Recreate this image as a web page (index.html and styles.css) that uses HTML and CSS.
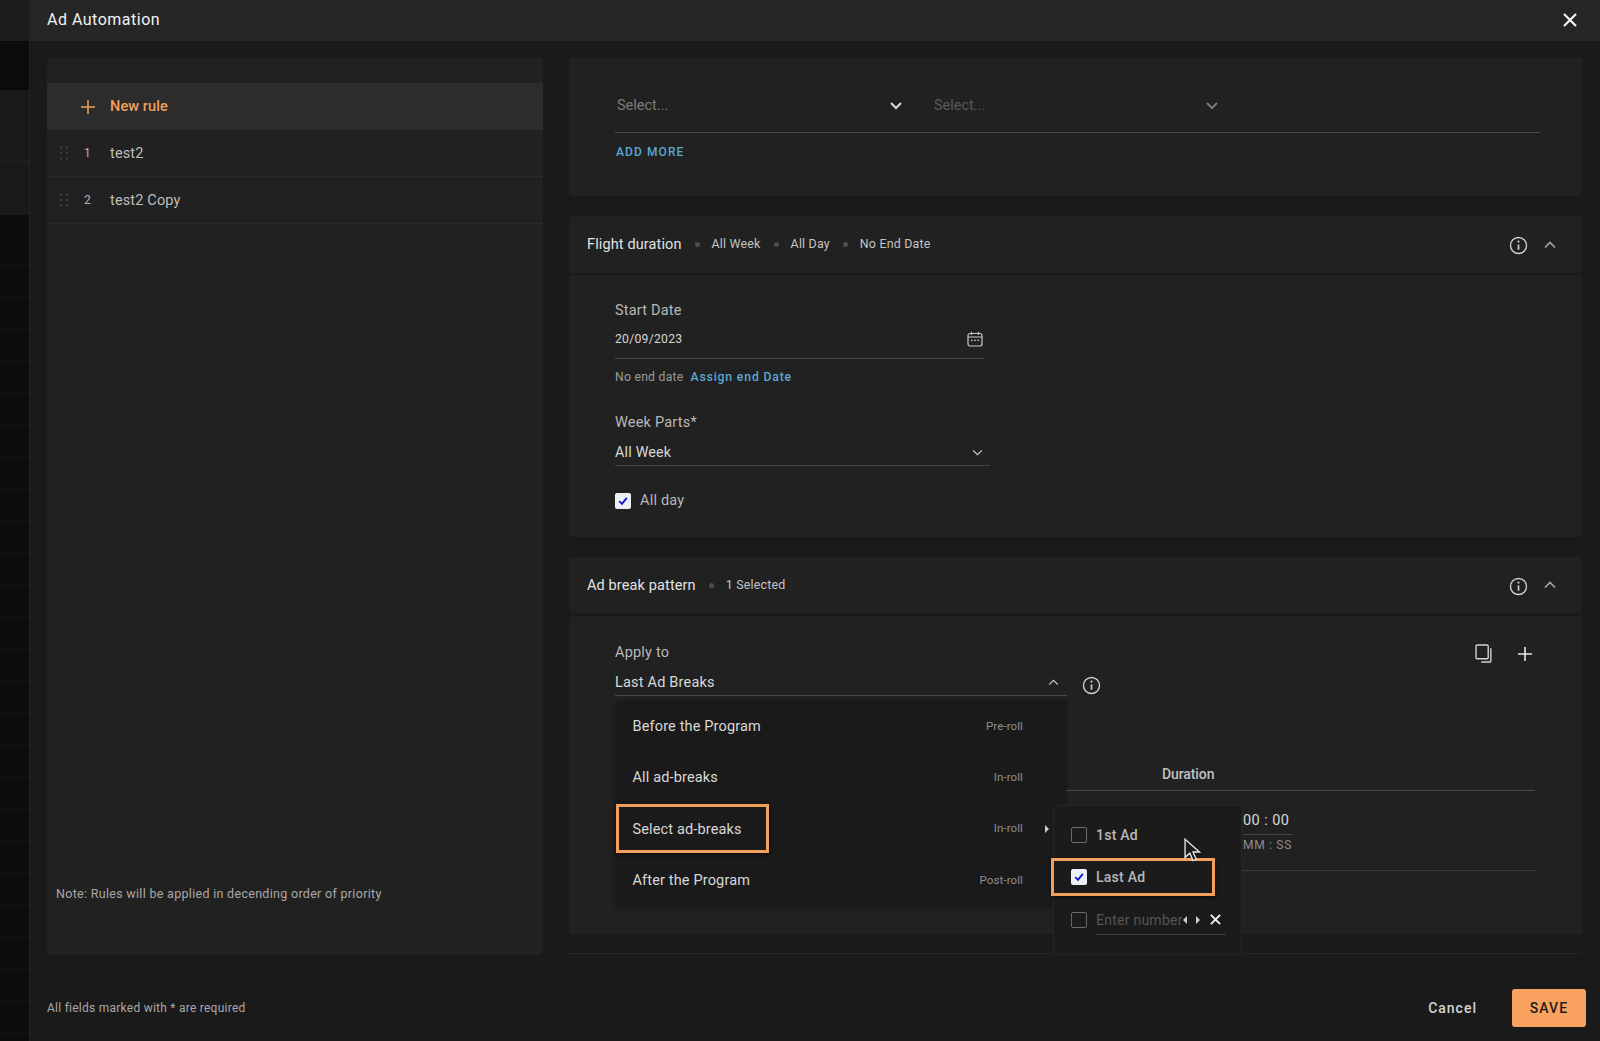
FILE: index.html
```html
<!DOCTYPE html>
<html lang="en">
<head>
<meta charset="utf-8">
<title>Ad Automation</title>
<link rel="stylesheet" href="styles.css">
</head>
<body>
<div class="app">
  <div class="strip">
    <div class="s-top"></div>
    <div class="s-dark"></div>
    <div class="s-mid"></div>
    <div class="s-mid s-mid2"></div>
    <div class="s-rows"></div>
  </div>
  <div class="drawer">
    <header class="top">
      <h1 class="title">Ad Automation</h1>
      <svg class="close" viewBox="0 0 16 16" width="16" height="16"><path d="M2 2l12 12M14 2L2 14"/></svg>
    </header>
    <main class="main">
      <aside class="rules">
        <div class="new-rule">
          <svg class="plus-orange" viewBox="0 0 14 14" width="14" height="14"><path d="M7 0v14M0 7h14"/></svg>
          <span>New rule</span>
        </div>
        <div class="rule">
          <svg class="grip" viewBox="0 0 8 14" width="8" height="14"><circle cx="1" cy="1.5" r="1"/><circle cx="7" cy="1.5" r="1"/><circle cx="1" cy="7" r="1"/><circle cx="7" cy="7" r="1"/><circle cx="1" cy="12.5" r="1"/><circle cx="7" cy="12.5" r="1"/></svg>
          <span class="num">1</span><span class="rname">test2</span>
        </div>
        <div class="rule">
          <svg class="grip" viewBox="0 0 8 14" width="8" height="14"><circle cx="1" cy="1.5" r="1"/><circle cx="7" cy="1.5" r="1"/><circle cx="1" cy="7" r="1"/><circle cx="7" cy="7" r="1"/><circle cx="1" cy="12.5" r="1"/><circle cx="7" cy="12.5" r="1"/></svg>
          <span class="num">2</span><span class="rname">test2 Copy</span>
        </div>
        <p class="note">Note: Rules will be applied in decending order of priority</p>
      </aside>

      <section class="content">
        <div class="card card-select">
          <div class="select-row">
            <div class="sel"><span>Select...</span><svg class="chev-bold" viewBox="0 0 12 8" width="12" height="8"><path d="M1 1l5 5 5-5"/></svg></div>
            <div class="sel sel-dim"><span>Select...</span><svg class="chev-bold" viewBox="0 0 12 8" width="12" height="8"><path d="M1 1l5 5 5-5"/></svg></div>
          </div>
          <a class="add-more">ADD MORE</a>
        </div>

        <div class="card sec-head">
          <span class="sec-title">Flight duration</span>
          <i class="dot"></i><span class="meta">All Week</span>
          <i class="dot"></i><span class="meta">All Day</span>
          <i class="dot"></i><span class="meta">No End Date</span>
          <span class="grow"></span>
          <svg class="info" viewBox="0 0 18 18" width="19" height="19"><circle cx="9" cy="9" r="7.6"/><path d="M9 8v5"/><circle class="fill" cx="9" cy="5.3" r="1"/></svg>
          <svg class="chev-up" viewBox="0 0 12 8" width="12" height="8"><path d="M1 6.5L6 1.5l5 5"/></svg>
        </div>
        <div class="card flight">
          <div class="label">Start Date</div>
          <div class="date-field">
            <span>20/09/2023</span>
            <svg class="cal" viewBox="0 0 16 16" width="16" height="16"><rect x="1" y="2.5" width="14" height="12.5" rx="2"/><path d="M1 6h14M4.5 .8v3M11.5 .8v3"/><path class="dash" d="M4 9.3h1.600M7.2 9.3h1.600M10.4 9.3h1.600"/></svg>
          </div>
          <div class="end-line"><span>No end date</span><a>Assign end Date</a></div>
          <div class="label label-week">Week Parts*</div>
          <div class="week-field">
            <span>All Week</span>
            <svg class="chev-thin" viewBox="0 0 12 8" width="11" height="7"><path d="M1 1.5l5 5 5-5"/></svg>
          </div>
          <label class="allday">
            <span class="check on"><svg viewBox="0 0 12 12" width="12" height="12"><path d="M2.3 6.2l2.7 2.7 4.8-6"/></svg></span>
            <span>All day</span>
          </label>
        </div>

        <div class="card sec-head sec-head2">
          <span class="sec-title">Ad break pattern</span>
          <i class="dot"></i><span class="meta">1 Selected</span>
          <span class="grow"></span>
          <svg class="info" viewBox="0 0 18 18" width="19" height="19"><circle cx="9" cy="9" r="7.6"/><path d="M9 8v5"/><circle class="fill" cx="9" cy="5.3" r="1"/></svg>
          <svg class="chev-up" viewBox="0 0 12 8" width="12" height="8"><path d="M1 6.5L6 1.5l5 5"/></svg>
        </div>
        <div class="card pattern">
          <div class="tools">
            <svg class="copy" viewBox="0 0 18 18" width="19" height="19"><rect x="1" y="1" width="11.5" height="13" rx="1"/><path d="M15 4v12.2a.8.8 0 0 1-.8.8H6"/></svg>
            <svg class="plus-white" viewBox="0 0 14 14" width="14" height="14"><path d="M7 0v14M0 7h14"/></svg>
          </div>
          <div class="label">Apply to</div>
          <div class="apply-row">
            <div class="apply-field">
              <span>Last Ad Breaks</span>
              <svg class="chev-thin" viewBox="0 0 12 8" width="11" height="7"><path d="M1 6.5l5-5 5 5"/></svg>
            </div>
            <svg class="info info-apply" viewBox="0 0 18 18" width="19" height="19"><circle cx="9" cy="9" r="7.6"/><path d="M9 8v5"/><circle class="fill" cx="9" cy="5.3" r="1"/></svg>
          </div>
          <div class="table-head"><span>Duration</span></div>
          <div class="table-row">
            <div class="dur"><span class="dur-val">00 : 00</span><span class="dur-unit">MM : SS</span></div>
          </div>

          <div class="menu">
            <div class="mi"><span>Before the Program</span><em>Pre-roll</em></div>
            <div class="mi"><span>All ad-breaks</span><em>In-roll</em></div>
            <div class="mi"><span>Select ad-breaks</span><em>In-roll</em>
              <svg class="tri" viewBox="0 0 6 10" width="6" height="10"><path d="M1 1l4 4-4 4z"/></svg>
            </div>
            <div class="mi"><span>After the Program</span><em>Post-roll</em></div>
            <div class="hl hl-menu"></div>
          </div>

          <div class="submenu">
            <div class="si"><span class="check"></span><span>1st Ad</span></div>
            <div class="si"><span class="check on"><svg viewBox="0 0 12 12" width="12" height="12"><path d="M2.3 6.2l2.7 2.7 4.8-6"/></svg></span><span>Last Ad</span></div>
            <div class="si si-num">
              <span class="check"></span>
              <div class="num-field">
                <span class="ph">Enter number</span>
                <svg class="tri-l" viewBox="0 0 6 10" width="6" height="10"><path d="M5 1L1 5l4 4z"/></svg>
                <svg class="tri tri-r" viewBox="0 0 6 10" width="6" height="10"><path d="M1 1l4 4-4 4z"/></svg>
                <svg class="x-small" viewBox="0 0 10 10" width="11" height="11"><path d="M.8.8l8.400 8.400M9.200.8L.8 9.200"/></svg>
              </div>
            </div>
            <div class="hl hl-sub"></div>
          </div>
          <svg class="cursor" viewBox="0 0 16 24" width="17" height="26"><path d="M1 1v17l4.5-4 3 7 3-1.300-3-6.700H14.500z"/></svg>
        </div>
        <div class="rule-line"></div>
      </section>
    </main>
    <footer class="foot">
      <span class="req">All fields marked with * are required</span>
      <span class="grow"></span>
      <button class="cancel">Cancel</button>
      <button class="save">SAVE</button>
    </footer>
  </div>
</div>
</body>
</html>
```

FILE: styles.css
```css
* { box-sizing: border-box; }
html, body { margin: 0; height: 100%; background: #1a1a1a; }
body { font-family: Roboto, "Liberation Sans", sans-serif; color: #ccc; overflow: hidden; }
svg { display: block; flex: none; fill: none; }
a { cursor: pointer; }

.app { display: flex; width: 1600px; height: 1041px; }

.strip { width: 29px; flex: none; display: flex; flex-direction: column; background: #0d0d0d; }
.s-top { height: 41px; background: #1d1d1d; }
.s-dark { height: 49px; background: #0b0b0b; }
.s-mid { height: 72px; background: #1a1a1a; border-bottom: 1px solid #242424; }
.s-mid2 { height: 53px; border-bottom: 0; }
.s-rows { flex: 1; background: repeating-linear-gradient(to bottom, #0d0d0d 0, #0d0d0d 31px, #171717 31px, #171717 32px); background-position: 0 19px; }

.drawer { flex: 1; min-width: 0; display: flex; flex-direction: column; border-left: 1px solid #232323; }

.top { height: 41px; flex: none; background: #262626; display: flex; align-items: center; padding: 0 22px 2px 17px; justify-content: space-between; }
.title { margin: 0; font-size: 16px; font-weight: 400; color: #f2f2f2; letter-spacing: .5px; }
.close path { stroke: #f2f2f2; stroke-width: 2.2; }

.main { flex: none; height: 919px; display: flex; padding: 17px 18px 0 17px; gap: 26px; }

.rules { width: 496px; flex: none; height: 897px; background: #212121; border-radius: 4px; padding-top: 25px; display: flex; flex-direction: column; }
.new-rule { height: 47px; background: #2c2c2c; display: flex; align-items: center; padding-left: 34px; color: #f0a05c; font-size: 14.5px; font-weight: 500; gap: 15px; letter-spacing: .1px; }
.plus-orange path { stroke: #f0a05c; stroke-width: 1.5; }
.rule { height: 47px; display: flex; align-items: center; border-bottom: 1px solid #292929; padding-left: 13px; }
.grip { fill: #4a4a4a; }
.num { width: 12px; margin-left: 16px; font-size: 12px; color: #b5b5b5; }
.rname { margin-left: 14px; font-size: 14.5px; line-height: 20px; padding-top: 1px; color: #bdbdbd; letter-spacing: .15px; }
.note { margin: auto 0 0; padding: 0 0 53px 9px; font-size: 12.5px; line-height: 16px; color: #a8a8a8; letter-spacing: .3px; }

.content { flex: 1; min-width: 0; display: flex; flex-direction: column; }
.card { background: #212121; border-radius: 3px; }

.card-select { height: 138px; padding: 33px 42px 0 46px; }
.select-row { display: flex; height: 42px; border-bottom: 1px solid #4a4a4a; padding-left: 2px; }
.sel { width: 317px; display: flex; justify-content: space-between; padding: 1px 32px 0 0; height: 28px; align-items: center; font-size: 14.5px; color: #7b7b7b; }
.sel-dim { color: #5a5a5a; width: 289px; padding-right: 5px; }
.chev-bold path { stroke: #d8d8d8; stroke-width: 2; }
.sel-dim .chev-bold path { stroke: #7a7a7a; }
.add-more { display: block; margin: 10px 0 0 1px; font-size: 12px; line-height: 18px; font-weight: 500; color: #5aa7d4; letter-spacing: 1.1px; }

.sec-head { height: 57px; margin-top: 20px; display: flex; align-items: center; padding: 0 26px 0 18px; }
.sec-head2 { height: 56px; }
.sec-title { font-size: 14.5px; color: #e2e2e2; letter-spacing: .12px; }
.dot { width: 5px; height: 5px; border-radius: 50%; background: #4d4d4d; margin: 0 12px 0 13px; }
.meta { font-size: 12.4px; line-height: 16px; padding-bottom: 2px; color: #c4c4c4; letter-spacing: .2px; }
.sec-head2 .meta { padding-bottom: 0; }
.grow { flex: 1; }
.info { margin-top: 2px; }
.info circle { stroke: #cfcfcf; stroke-width: 1.3; }
.info path { stroke: #cfcfcf; stroke-width: 1.6; }
.info .fill { fill: #cfcfcf; stroke: none; }
.chev-up { margin-left: 16px; }
.chev-up path { stroke: #a8a8a8; stroke-width: 1.6; }

.flight { height: 262px; margin-top: 2px; padding: 26px 0 0 46px; }
.label { font-size: 14.5px; line-height: 20px; color: #b8b8b8; letter-spacing: .2px; }
.date-field { width: 369px; height: 38px; display: flex; align-items: center; justify-content: space-between; padding: 2px 1px 3px 0; border-bottom: 1px solid #4a4a4a; font-size: 12.2px; color: #d5d5d5; letter-spacing: .25px; }
.cal rect, .cal path { stroke: #c8c8c8; stroke-width: 1.2; }
.end-line { display: flex; gap: 6px; margin-top: 10px; font-size: 12.2px; line-height: 17px; color: #9a9a9a; letter-spacing: .25px; }
.end-line a { margin-left: 1px; color: #5aa7d4; font-weight: 500; letter-spacing: .85px; }
.label-week { margin-top: 27px; }
.week-field { width: 375px; height: 33px; padding: 6px 7px 0 0; display: flex; align-items: center; justify-content: space-between; border-bottom: 1px solid #444; font-size: 14.3px; color: #d8d8d8; letter-spacing: .2px; }
.chev-thin path { stroke: #d0d0d0; stroke-width: 1.3; }
.allday { display: flex; align-items: center; gap: 9px; margin-top: 26px; font-size: 14.5px; color: #b8b8b8; letter-spacing: .2px; }

.check { width: 16px; height: 16px; flex: none; border: 1.5px solid #6a6a6a; border-radius: 2px; display: flex; align-items: center; justify-content: center; }
.check.on { background: #eef0f8; border: 0; }
.check path { stroke: #1414c8; stroke-width: 1.8; }

.pattern { position: relative; height: 318px; margin-top: 3px; padding: 27px 47px 0 46px; }
.tools { position: absolute; right: 50px; top: 28px; display: flex; align-items: center; gap: 24px; }
.copy rect, .copy path { stroke: #d4d4d4; stroke-width: 1.3; }
.plus-white path { stroke: #e8e8e8; stroke-width: 1.6; }
.apply-row { display: flex; align-items: flex-end; margin-top: 9px; }
.apply-field { width: 452px; height: 24px; display: flex; align-items: center; justify-content: space-between; padding: 1px 8px 3px 0; border-bottom: 1px solid #4a4a4a; font-size: 14.5px; color: #d8d8d8; letter-spacing: .2px; }
.info-apply { margin: 0 0 1px 15px; }

.table-head { margin-top: 68px; height: 27px; border-bottom: 1px solid #4a4a4a; font-size: 14px; font-weight: 500; color: #c0c0c0; padding-left: 547px; line-height: 20px; letter-spacing: -.1px; }
.table-row { height: 80px; border-bottom: 1px solid #3a3a3a; padding-left: 628px; padding-top: 21px; }
.dur { display: flex; flex-direction: column; width: 50px; }
.dur-val { font-size: 14.5px; line-height: 18px; height: 23px; color: #d8d8d8; border-bottom: 1px solid #444; letter-spacing: .45px; white-space: nowrap; }
.dur-unit { font-size: 12px; line-height: 17px; margin-top: 2px; color: #8e8e8e; letter-spacing: .7px; white-space: nowrap; }

.menu { position: absolute; left: 46px; top: 85px; width: 451px; height: 205px; background: #1a1a1a; box-shadow: 0 1px 4px rgba(0,0,0,.25); border-radius: 2px; }
.mi { position: relative; height: 51.3px; display: flex; align-items: center; justify-content: space-between; padding: 0 43px 0 17.5px; font-size: 14.5px; color: #d8d8d8; letter-spacing: .15px; }
.mi em { font-style: normal; font-size: 11.5px; color: #8e8e8e; letter-spacing: .1px; padding-bottom: 2px; }
.tri { fill: #cfcfcf; }
.mi .tri { position: absolute; right: 16px; top: 20px; }
.hl { position: absolute; border: 3px solid #f39f5c; box-shadow: 0 2px 4px rgba(0,0,0,.45); pointer-events: none; }
.hl-menu { left: 1px; top: 103px; width: 153px; height: 49px; }

.submenu { position: absolute; left: 484px; top: 189px; width: 189px; height: 150px; background: #1b1b1b; border: 1px solid #242424; border-radius: 2px; padding: 8px 0 0 17px; }
.si { display: flex; align-items: center; gap: 9px; height: 42px; font-size: 14px; color: #b8b8b8; font-weight: 500; letter-spacing: .25px; }
.si-num { margin-top: 1px; }
.num-field { width: 130px; height: 30px; display: flex; align-items: center; border-bottom: 1px solid #3e3e3e; font-weight: 400; }
.ph { color: #555; width: 89px; overflow: hidden; white-space: nowrap; }
.tri-l { fill: #cfcfcf; margin-left: -3px; }
.tri-r { margin-left: 7px; }
.x-small { margin-left: 9px; }
.x-small path { stroke: #eee; stroke-width: 1.8; }
.hl-sub { left: -3px; top: 52px; width: 164px; height: 38px; }

.cursor { position: absolute; left: 615px; top: 222px; }
.cursor path { fill: #1c1c1c; stroke: #e4e4e4; stroke-width: 1.3; }

.rule-line { height: 1px; margin-top: 19px; background: #262626; }

.foot { flex: 1; display: flex; align-items: center; padding: 14px 14px 0 17px; }
.req { font-size: 12px; color: #a8a8a8; letter-spacing: .25px; }
button { font-family: inherit; border: 0; cursor: pointer; }
.cancel { background: none; color: #d4d4d4; font-size: 14px; font-weight: 500; letter-spacing: 1px; padding: 0; margin-right: 35px; }
.save { width: 74px; height: 38px; background: #f9a25f; border-radius: 3px; color: #1c1c1c; font-size: 14px; font-weight: 500; letter-spacing: 1.1px; }
```
